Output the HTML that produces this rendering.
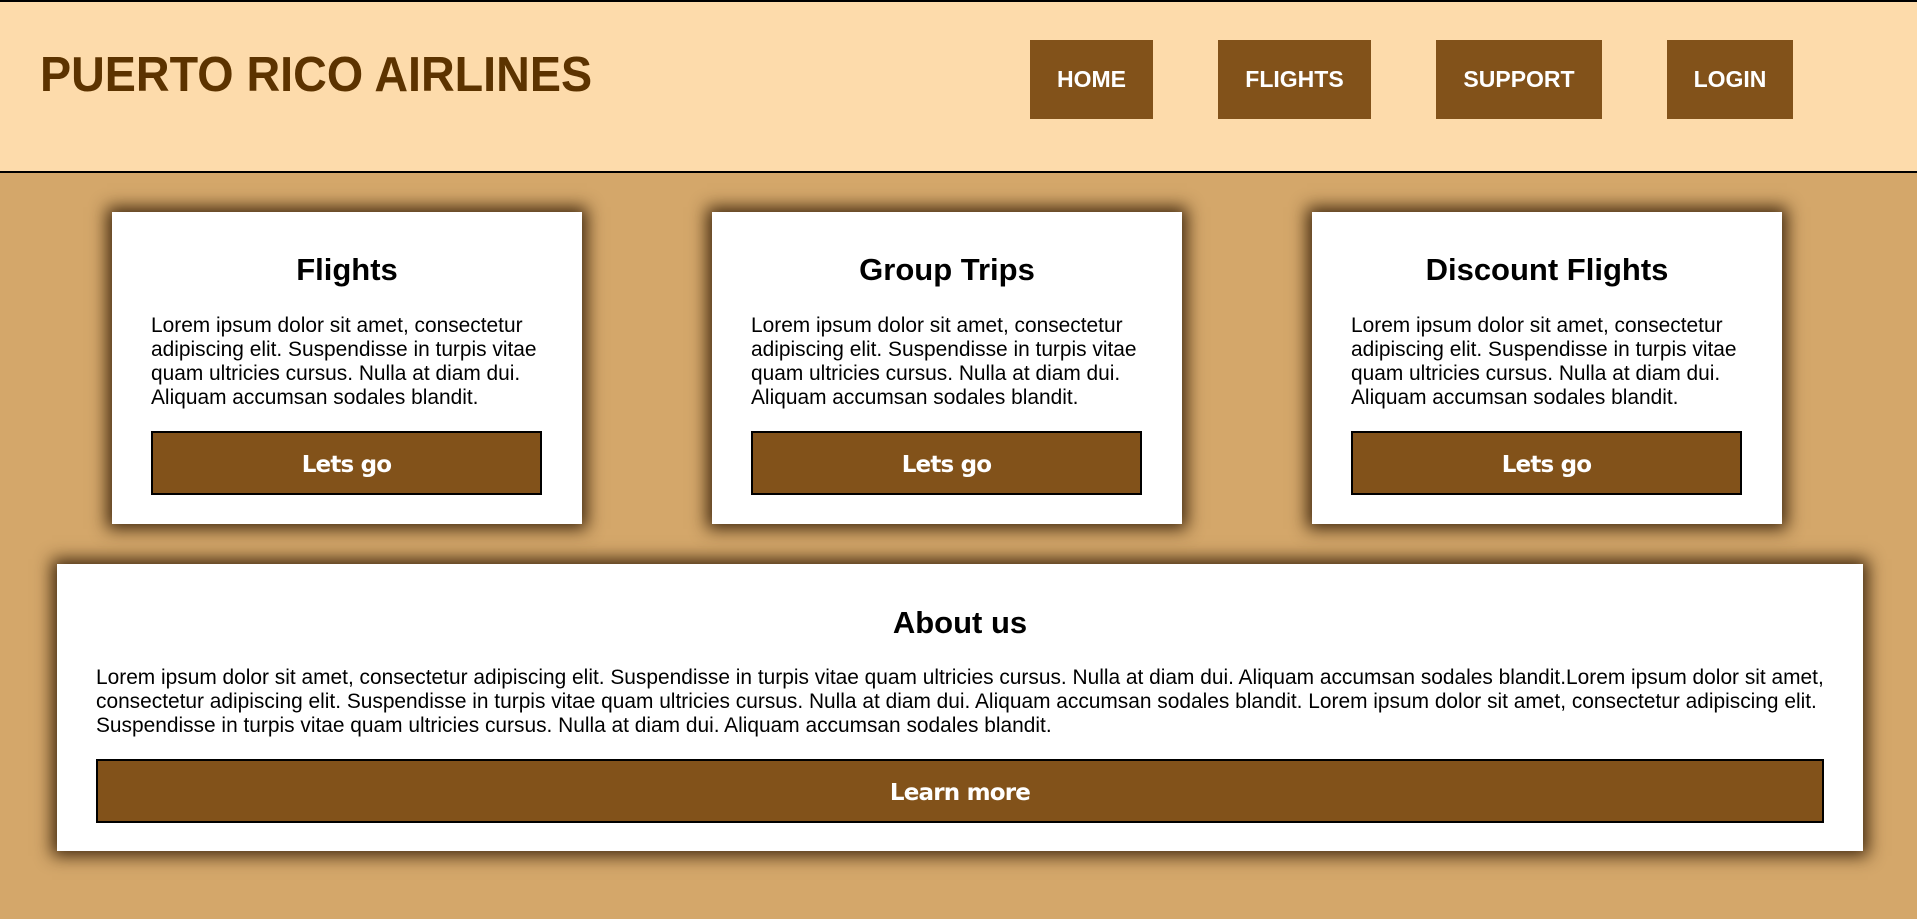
<!DOCTYPE html>
<html><head><meta charset="utf-8"><style>
*{margin:0;padding:0;box-sizing:border-box}
html,body{width:1917px;height:919px;overflow:hidden;background:#d4a76a;font-family:"Liberation Sans",Arial,sans-serif;position:relative}
.hdr{position:absolute;left:0;top:0;width:1917px;height:173px;background:#fddbab;border-top:2px solid #000;border-bottom:2px solid #000}
.title{position:absolute;left:40px;top:47px;font-size:49px;font-weight:bold;color:#5c3300;transform:scaleX(0.952);transform-origin:left top;white-space:nowrap}
.nav{position:absolute;top:40px;height:79px;background:#82521a;color:#fff;font-weight:bold;font-size:23px;display:flex;align-items:center;justify-content:center}
.card{position:absolute;background:#fff;box-shadow:0 0 16px 5px rgba(50,28,5,0.9)}
.card h2{position:absolute;left:0;right:0;text-align:center;font-size:31px;font-weight:bold;color:#000}
.card p{position:absolute;font-size:20.9px;line-height:24px;color:#000}
.btn{position:absolute;background:#82521a;border:2px solid #000;color:#fff;font-family:"DejaVu Sans",Verdana,sans-serif;font-weight:bold;font-size:23px;letter-spacing:-0.8px;display:flex;align-items:center;justify-content:center;padding-top:3px}
</style></head><body>
<div class="hdr"></div>
<div class="title">PUERTO RICO AIRLINES</div>
<div class="nav" style="left:1030px;width:123px">HOME</div>
<div class="nav" style="left:1218px;width:153px">FLIGHTS</div>
<div class="nav" style="left:1436px;width:166px">SUPPORT</div>
<div class="nav" style="left:1667px;width:126px">LOGIN</div>

<div class="card" style="left:112px;top:212px;width:470px;height:312px">
<h2 style="top:40px">Flights</h2>
<p style="left:39px;top:102px;width:405px">Lorem ipsum dolor sit amet, consectetur adipiscing elit. Suspendisse in turpis vitae quam ultricies cursus. Nulla at diam dui. Aliquam accumsan sodales blandit.</p>
<div class="btn" style="left:39px;top:219px;width:391px;height:64px">Lets go</div>
</div>
<div class="card" style="left:712px;top:212px;width:470px;height:312px">
<h2 style="top:40px">Group Trips</h2>
<p style="left:39px;top:102px;width:405px">Lorem ipsum dolor sit amet, consectetur adipiscing elit. Suspendisse in turpis vitae quam ultricies cursus. Nulla at diam dui. Aliquam accumsan sodales blandit.</p>
<div class="btn" style="left:39px;top:219px;width:391px;height:64px">Lets go</div>
</div>
<div class="card" style="left:1312px;top:212px;width:470px;height:312px">
<h2 style="top:40px">Discount Flights</h2>
<p style="left:39px;top:102px;width:405px">Lorem ipsum dolor sit amet, consectetur adipiscing elit. Suspendisse in turpis vitae quam ultricies cursus. Nulla at diam dui. Aliquam accumsan sodales blandit.</p>
<div class="btn" style="left:39px;top:219px;width:391px;height:64px">Lets go</div>
</div>

<div class="card" style="left:57px;top:564px;width:1806px;height:287px">
<h2 style="top:41px">About us</h2>
<p style="left:39px;top:102px;width:1740px">Lorem ipsum dolor sit amet, consectetur adipiscing elit. Suspendisse in turpis vitae quam ultricies cursus. Nulla at diam dui. Aliquam accumsan sodales blandit.Lorem ipsum dolor sit amet, consectetur adipiscing elit. Suspendisse in turpis vitae quam ultricies cursus. Nulla at diam dui. Aliquam accumsan sodales blandit. Lorem ipsum dolor sit amet, consectetur adipiscing elit. Suspendisse in turpis vitae quam ultricies cursus. Nulla at diam dui. Aliquam accumsan sodales blandit.</p>
<div class="btn" style="left:39px;top:195px;width:1728px;height:64px">Learn more</div>
</div>
</body></html>
